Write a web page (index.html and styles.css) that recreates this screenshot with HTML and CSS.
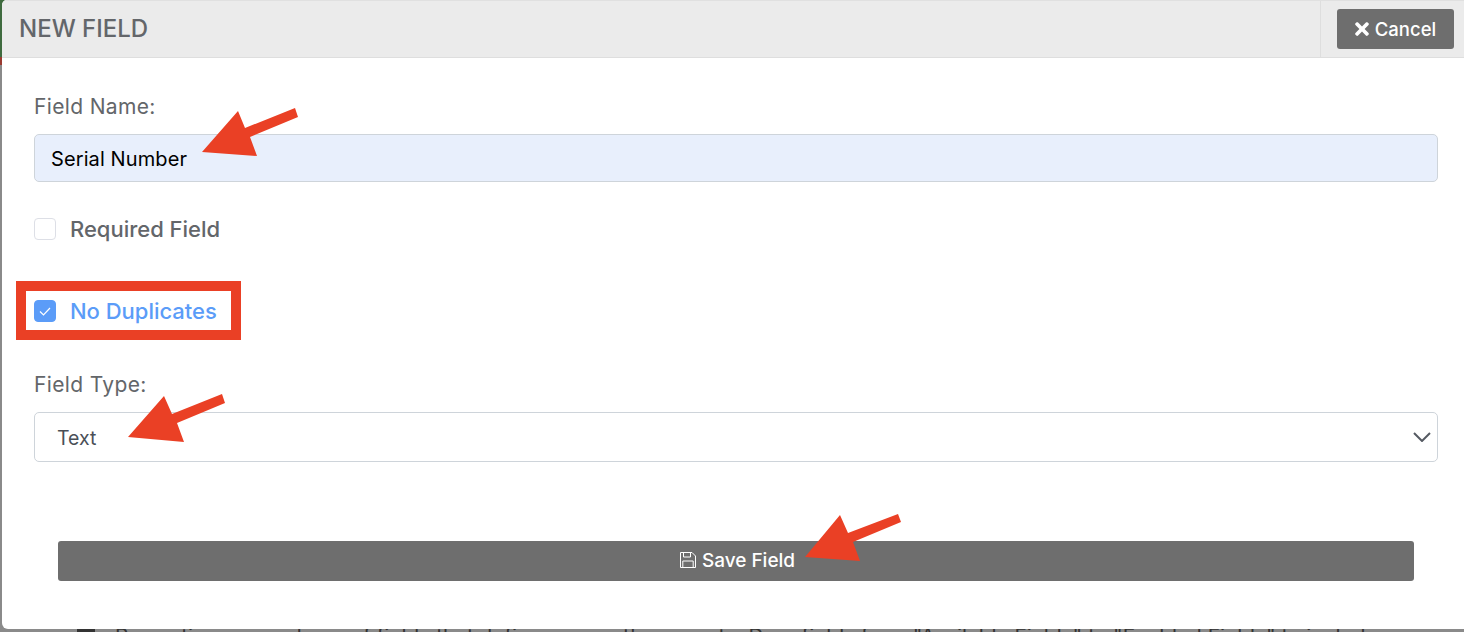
FILE: index.html
```html
<!DOCTYPE html>
<html lang="en">
    <head>
        <meta charset="UTF-8">
        <title>New Field</title>
        <link rel="stylesheet" href="styles.css">
    </head>
    <body>
        <div class="modal">
            <div class="modal-header">
                <h1 class="modal-title">NEW FIELD</h1>
                <div class="modal-actions">
                    <button class="button cancel-button" type="button">
                        <svg class="icon-times" viewBox="0 0 352 512"><path fill="currentColor" d="M242.72 256l100.07-100.07c12.28-12.28 12.28-32.19 0-44.48l-22.24-22.24c-12.28-12.28-32.19-12.28-44.48 0L176 189.28 75.93 89.21c-12.28-12.28-32.19-12.28-44.48 0L9.21 111.45c-12.28 12.28-12.28 32.19 0 44.48L109.28 256 9.21 356.07c-12.28 12.28-12.28 32.19 0 44.48l22.24 22.24c12.28 12.28 32.2 12.28 44.48 0L176 322.72l100.07 100.07c12.28 12.28 32.2 12.28 44.48 0l22.24-22.24c12.28-12.28 12.28-32.19 0-44.48L242.72 256z"/></svg>
                        Cancel
                    </button>
                </div>
            </div>
            <form class="modal-body">
                <label class="field-label" for="fieldName">Field Name:</label>
                <input class="text-input" id="fieldName" type="text" value="Serial Number">

                <label class="check-row first-check">
                    <span class="check"></span>
                    <span>Required Field</span>
                </label>
                <label class="check-row second-check checked">
                    <span class="check">
                        <svg viewBox="0 0 22 22"><path d="M6 11.5l3.5 3.5L16 8" fill="none" stroke="#fff" stroke-width="1.2"/></svg>
                    </span>
                    <span>No Duplicates</span>
                </label>

                <label class="field-label type-label" for="fieldType">Field Type:</label>
                <div class="select-wrap">
                    <select class="select-input" id="fieldType">
                        <option>Text</option>
                    </select>
                    <svg class="chevron" viewBox="0 0 18 10"><path d="M1 1l8 8 8-8" fill="none" stroke="#555a62" stroke-width="2"/></svg>
                </div>

                <button class="button save-button" type="button">
                    <svg class="icon-save" viewBox="0 0 16 16"><path d="M.5.5h11.5l3.5 3.5v11.5H.5z M3.5.5v4.5h7V.5 M2.8 15.5V9h10.4v6.500" fill="none" stroke="currentColor" stroke-width="1"/></svg>
                    Save Field
                </button>
            </form>
        </div>
        <p class="page-text"><span class="page-bullet"></span>Properties are made up of fields that define an asset's property. Drag fields from "Available Fields" to "Enabled Fields" to include</p>

        <svg class="annotations" viewBox="0 0 1464 632">
            <rect x="21" y="286" width="215" height="49" fill="none" stroke="#ea4025" stroke-width="10"/>
            <path fill="#ea4025" d="M295 108L298 117L250 137L257 156L202 152L238 111L245 128z"/>
            <path fill="#ea4025" d="M222 394L225 403L177 423L184 442L128 437L164 396L172 414z"/>
            <path fill="#ea4025" d="M898 514L901 522L853 542L860 561L805 557L840 515L848 533z"/>
        </svg>
    </body>
</html>
```

FILE: styles.css
```css
* {
    box-sizing: border-box;
    font-family: Inter, "Liberation Sans", sans-serif;
}
html, body {
    margin: 0;
    height: 632px;
    overflow: hidden;
}
body {
    position: relative;
    background: linear-gradient(#3f6b3f 0, #3f6b3f 57px, #9a3a30 57px, #9a3a30 65px, #8a8a8a 65px);
}
.modal {
    margin-left: 2px;
    height: 629px;
    background-color: #fff;
    border-top-left-radius: 5px;
    border-bottom-left-radius: 6px;
    overflow: hidden;
}
.modal-header {
    display: flex;
    align-items: stretch;
    justify-content: space-between;
    height: 58px;
    background-color: #ebebeb;
    border-top: 1px solid #e0e0e0;
    border-bottom: 1px solid #dedede;
}
.modal-title {
    margin: 0;
    padding-left: 17px;
    font-size: 24px;
    font-weight: 500;
    line-height: 56px;
    color: #63666a;
}
.modal-actions {
    display: flex;
    align-items: center;
    width: 144px;
    padding-left: 16px;
    border-left: 1px solid #dedede;
}
.button {
    display: flex;
    align-items: center;
    justify-content: center;
    border: none;
    border-radius: 3px;
    background-color: #6e6e6e;
    color: #fff;
    font-weight: 500;
}
.cancel-button {
    gap: 6px;
    width: 117px;
    height: 40px;
    padding-bottom: 2px;
    font-size: 18.5px;
}
.icon-times {
    width: 14px;
    height: 20px;
}
.modal-body {
    display: flex;
    flex-direction: column;
    align-items: flex-start;
    padding: 37px 26px 0 32px;
}
.field-label {
    font-size: 21px;
    letter-spacing: 0.35px;
    line-height: 24px;
    color: #63666a;
}
.text-input {
    width: 100%;
    height: 48px;
    margin-top: 15px;
    padding: 2px 16px 0;
    border: 1px solid #ced4da;
    border-radius: 5px;
    background-color: #e8effc;
    color: #000;
    font-size: 20px;
    letter-spacing: 0.1px;
    outline: none;
}
.check-row {
    display: flex;
    align-items: center;
    gap: 14px;
    height: 22px;
    font-size: 22px;
    font-weight: 500;
    letter-spacing: -0.02px;
    color: #63666a;
}
.first-check {
    margin-top: 36px;
}
.second-check {
    margin-top: 60px;
}
.check {
    display: block;
    width: 22px;
    height: 22px;
    border: 1px solid #dddfe6;
    border-radius: 4px;
    background-color: #fff;
}
.check svg {
    display: block;
    width: 22px;
    height: 22px;
    margin: -1px;
}
.checked {
    color: #5b9cf8;
}
.checked .check {
    border-color: #5b9cf8;
    background-color: #5b9cf8;
}
.type-label {
    margin-top: 51px;
}
.select-wrap {
    position: relative;
    width: 100%;
    margin-top: 15px;
}
.select-input {
    display: block;
    width: 100%;
    height: 50px;
    padding: 2px 22px 0;
    border: 1px solid #ced4da;
    border-radius: 5px;
    background-color: #fff;
    color: #4a4f57;
    font-size: 19.5px;
    appearance: none;
    outline: none;
}
.chevron {
    position: absolute;
    top: 20px;
    right: 7px;
    width: 18px;
    height: 10px;
}
.save-button {
    gap: 6px;
    align-self: center;
    flex: none;
    width: 1356px;
    height: 40px;
    margin-top: 79px;
    padding: 0 0 2px 3px;
    font-size: 19px;
}
.icon-save {
    width: 16px;
    height: 16px;
}
.page-text {
    margin: 0;
    height: 3px;
    overflow: hidden;
    padding-left: 77px;
    font-size: 20.8px;
    line-height: 15px;
    white-space: nowrap;
    color: #333;
}
.page-bullet {
    display: inline-block;
    width: 18px;
    height: 15px;
    margin-right: 20px;
    background-color: #333;
}
.annotations {
    position: absolute;
    top: 0;
    left: 0;
    width: 1464px;
    height: 632px;
    pointer-events: none;
}
```
